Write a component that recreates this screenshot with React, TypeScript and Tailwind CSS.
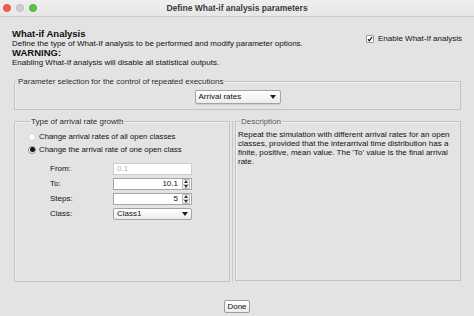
import * as React from "react"

function DownArrow() {
  return (
    <svg width="6" height="4" viewBox="0 0 6 4">
      <path d="M0 0h6L3 4z" fill="#1e1e1e" />
    </svg>
  )
}

function Spinner() {
  return (
    <div className="flex flex-col items-center justify-center w-[8px] h-[10px] mr-[1px] border border-[#b9b9b9] rounded-[1px] bg-[#f3f3f3]">
      <svg width="4" height="3" viewBox="0 0 4 3">
        <path d="M2 0L4 3H0z" fill="#333" />
      </svg>
      <div className="w-full h-px bg-[#c4c4c4] my-[0.5px]" />
      <svg width="4" height="3" viewBox="0 0 4 3">
        <path d="M0 0h4L2 3z" fill="#333" />
      </svg>
    </div>
  )
}

export default function App() {
  return (
    <div className="w-[474px] h-[316px] overflow-hidden flex flex-col bg-[#e3e3e3] text-[#111] font-['Liberation_Sans',Arial,sans-serif]">
      {/* title bar */}
      <div className="h-[17px] shrink-0 grid grid-cols-[1fr_auto_1fr] items-center bg-[linear-gradient(#efefef,#e7e7e7)] border-b border-[#cbcbcb]">
        <div className="flex items-center gap-[5px] pl-[3px]">
          <span className="w-[8px] h-[8px] rounded-full bg-[#ef5f57] border border-[#dd4c45]" />
          <span className="w-[8px] h-[8px] rounded-full bg-[#cdcdcd] border border-[#bdbdbd]" />
          <span className="w-[8px] h-[8px] rounded-full bg-[#5cc443] border border-[#4aad35]" />
        </div>
        <div className="text-[8.5px] font-bold text-[#3a3a3a] leading-none">Define What-if analysis parameters</div>
        <div />
      </div>

      {/* header */}
      <div className="flex justify-between pl-[12px] pr-[12px] pt-[12px]">
        <div className="flex flex-col">
          <div className="text-[9.5px] font-bold leading-[10px]">What-if Analysis</div>
          <div className="text-[8px] leading-[9px]">Define the type of What-If analysis to be performed and modify parameter options.</div>
          <div className="text-[9.5px] font-bold leading-[10px]">WARNING:</div>
          <div className="text-[8px] leading-[9px]">Enabling What-If analysis will disable all statistical outputs.</div>
        </div>
        <div className="flex items-center gap-[4px] mt-[5px] h-[10px] self-start">
          <span className="w-[8px] h-[8px] bg-white border border-[#9a9a9a] rounded-[1px] flex items-center justify-center">
            <svg width="6" height="6" viewBox="0 0 6 6">
              <path d="M1 3.2L2.4 4.8L5 1" stroke="#111" strokeWidth="1.3" fill="none" />
            </svg>
          </span>
          <span className="text-[8px] leading-none">Enable What-If analysis</span>
        </div>
      </div>

      {/* parameter selection */}
      <fieldset className="ml-[14px] mr-[13px] mt-[10px] border border-[#c3c3c3] shadow-[inset_1px_1px_0_#efefef] flex flex-col items-center pb-[5px]">
        <legend className="ml-[2px] px-[1px] text-[8px] leading-[9px] text-[#2a2a2a]">Parameter selection for the control of repeated executions</legend>
        <div className="mt-[4px] w-[86px] h-[14px] flex items-center justify-between pl-[3px] pr-[4px] border border-[#a3a3a3] rounded-[2px] bg-[linear-gradient(#ffffff,#ececec)] shadow-[0_1px_0_#d0d0d0]">
          <span className="text-[8px] leading-none">Arrival rates</span>
          <DownArrow />
        </div>
      </fieldset>

      {/* split pane */}
      <div className="flex ml-[14px] mr-[13px] mt-[7px] h-[166px]">
        <fieldset className="w-[216px] border border-[#c3c3c3] shadow-[inset_1px_1px_0_#efefef] pl-[13px] mb-[1px]">
          <legend className="ml-[2px] px-[1px] text-[8px] leading-[9px] text-[#2a2a2a]">Type of arrival rate growth</legend>
          <div className="flex flex-col gap-[2px] mt-[5px]">
            <div className="flex items-center gap-[3px] h-[11px]">
              <span className="w-[8px] h-[8px] rounded-full bg-white border border-[#cfcfcf]" />
              <span className="text-[7.8px] leading-none">Change arrival rates of all open classes</span>
            </div>
            <div className="flex items-center gap-[3px] h-[11px]">
              <span className="w-[8px] h-[8px] rounded-full bg-white border border-[#8a8a8a] flex items-center justify-center">
                <span className="w-[5px] h-[5px] rounded-full bg-[#111]" />
              </span>
              <span className="text-[7.8px] leading-none">Change the arrival rate of one open class</span>
            </div>
          </div>

          <div className="grid grid-cols-[63px_79px] gap-y-[3px] mt-[8px] pl-[22px] text-[8px]">
            <span className="h-[12px] flex items-center">From:</span>
            <div className="h-[12px] bg-white border border-[#cdcdcd] flex items-center pl-[3px] text-[#b5b5b5]">0.1</div>

            <span className="h-[12px] flex items-center">To:</span>
            <div className="h-[12px] bg-white border border-[#a6a6a6] flex items-center justify-end">
              <span className="mr-[4px]">10.1</span>
              <Spinner />
            </div>

            <span className="h-[12px] flex items-center">Steps:</span>
            <div className="h-[12px] bg-white border border-[#a6a6a6] flex items-center justify-end">
              <span className="mr-[4px]">5</span>
              <Spinner />
            </div>

            <span className="h-[12px] flex items-center">Class:</span>
            <div className="h-[12px] flex items-center justify-between pl-[3px] pr-[3px] border border-[#a3a3a3] rounded-[2px] bg-[linear-gradient(#ffffff,#ececec)]">
              <span>Class1</span>
              <DownArrow />
            </div>
          </div>
        </fieldset>

        {/* divider */}
        <div className="w-[5px] flex justify-center pt-[4px] pb-[1px]">
          <div className="w-px h-full bg-[#cacaca]" />
        </div>

        <fieldset className="flex-1 border border-[#c3c3c3] shadow-[inset_1px_1px_0_#efefef] pl-[2px] mb-[2px]">
          <legend className="ml-[2px] px-[1px] text-[8px] leading-[9px] text-[#555]">Description</legend>
          <div className="mt-[4px] text-[8px] leading-[9px] whitespace-nowrap">
            <div>Repeat the simulation with different arrival rates for an open</div>
            <div>classes, provided that the interarrival time distribution has a</div>
            <div>finite, positive, mean value. The 'To' value is the final arrival</div>
            <div>rate.</div>
          </div>
        </fieldset>
      </div>

      {/* footer */}
      <div className="flex justify-center mt-[17px]">
        <button className="w-[26px] h-[13px] flex items-center justify-center border border-[#9c9c9c] rounded-[2px] bg-[linear-gradient(#ffffff,#ededed)] text-[8px] leading-none">
          Done
        </button>
      </div>
    </div>
  )
}
